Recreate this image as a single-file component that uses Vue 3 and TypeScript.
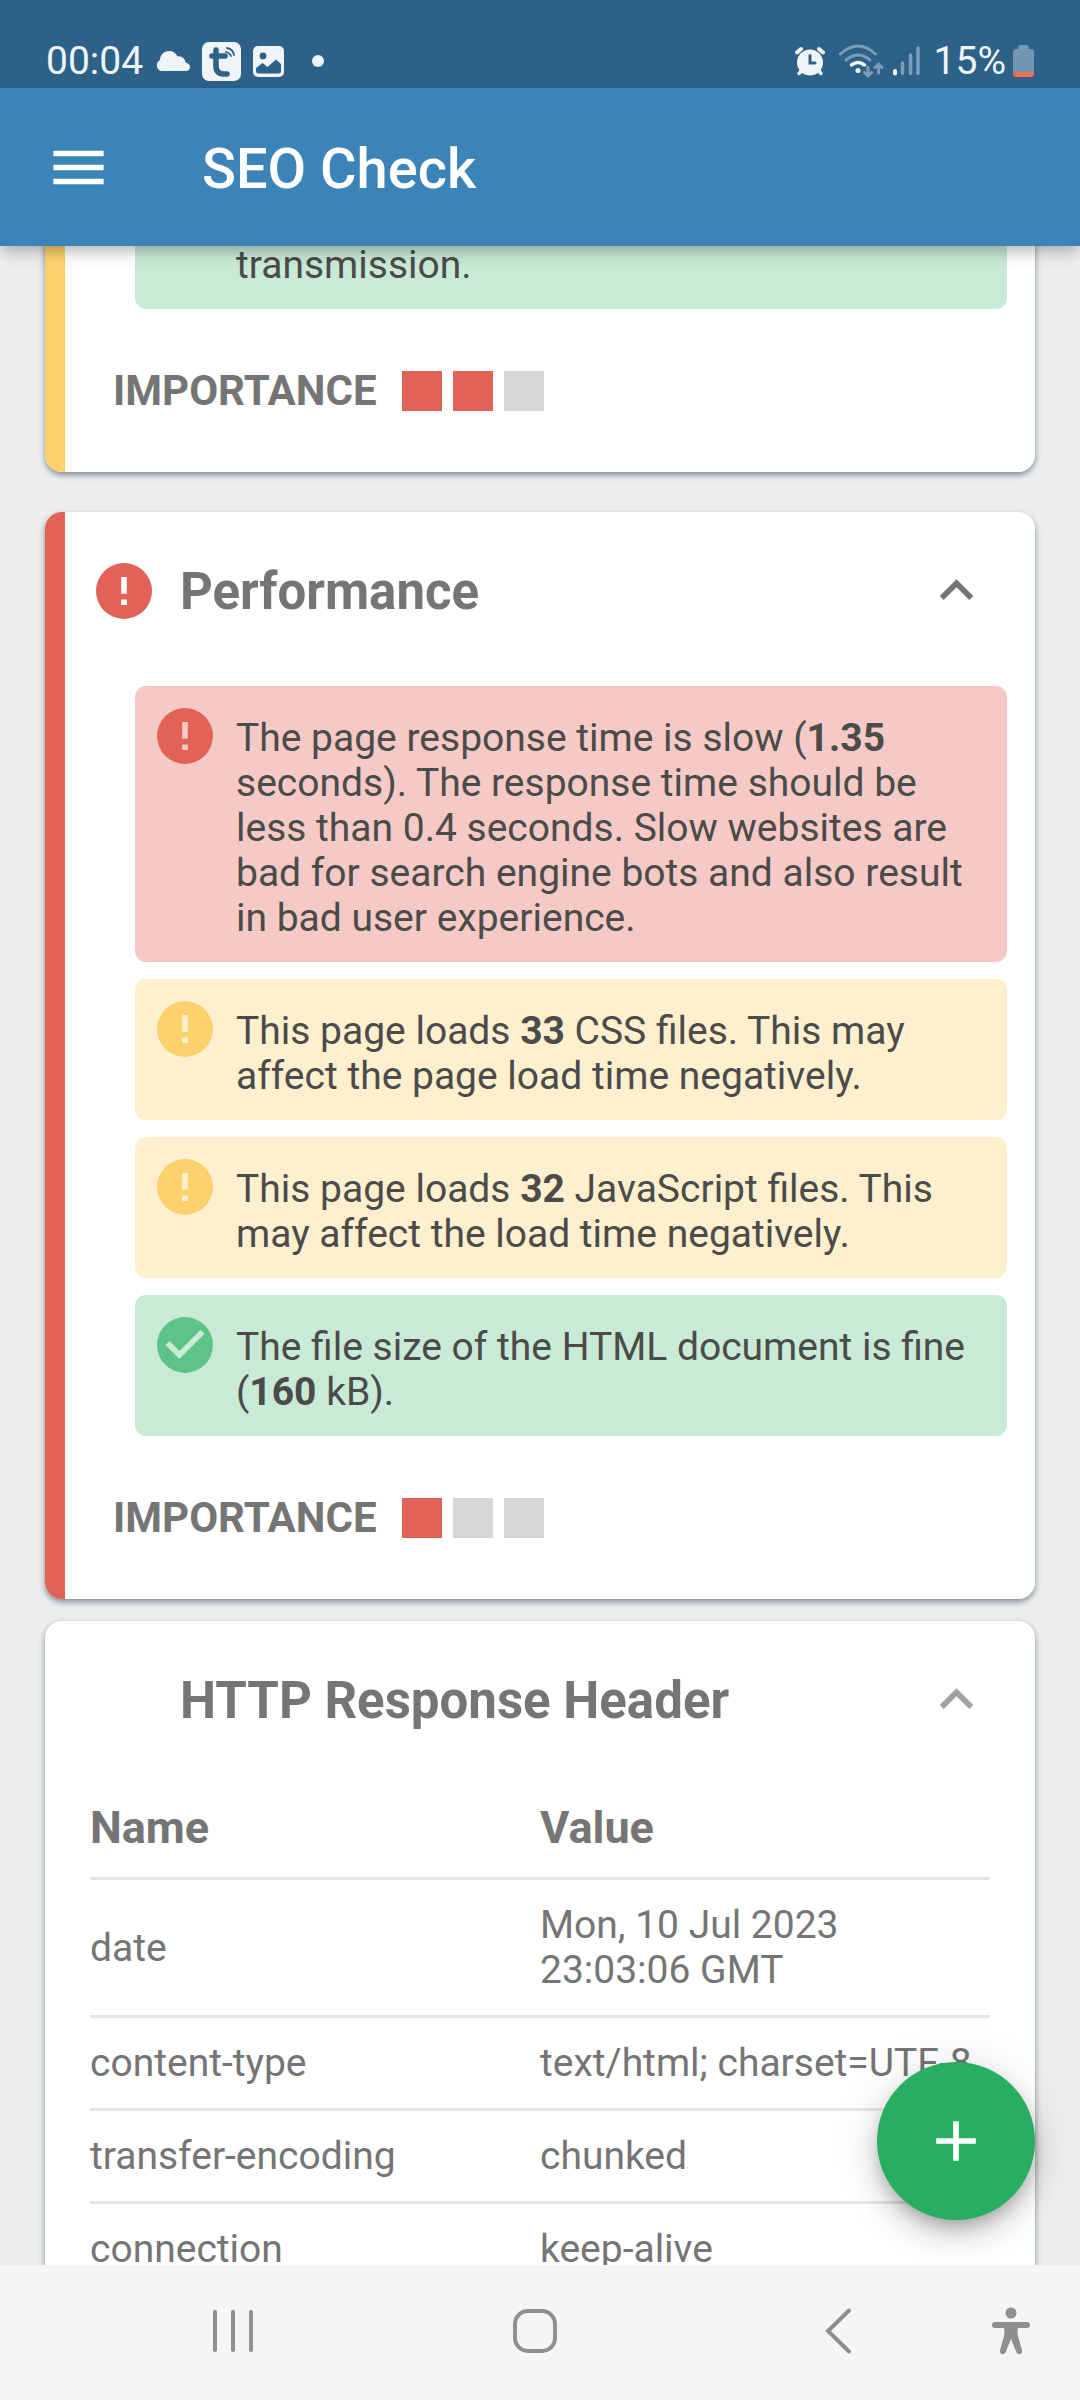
<script setup lang="ts">
type Level = 'error' | 'warning' | 'ok'

interface Part {
  text: string
  bold?: boolean
}

interface Finding {
  level: Level
  parts: Part[]
}

interface HeaderRow {
  name: string
  value: string
}

const findings: Finding[] = [
  {
    level: 'error',
    parts: [
      { text: 'The page response time is slow (' },
      { text: '1.35', bold: true },
      {
        text: ' seconds). The response time should be less than 0.4 seconds. Slow websites are bad for search engine bots and also result in bad user experience.',
      },
    ],
  },
  {
    level: 'warning',
    parts: [
      { text: 'This page loads ' },
      { text: '33', bold: true },
      { text: ' CSS files. This may affect the page load time negatively.' },
    ],
  },
  {
    level: 'warning',
    parts: [
      { text: 'This page loads ' },
      { text: '32', bold: true },
      { text: ' JavaScript files. This may affect the load time negatively.' },
    ],
  },
  {
    level: 'ok',
    parts: [
      { text: 'The file size of the HTML document is fine (' },
      { text: '160', bold: true },
      { text: ' kB).' },
    ],
  },
]

const headerRows: HeaderRow[] = [
  { name: 'date', value: 'Mon, 10 Jul 2023 23:03:06 GMT' },
  { name: 'content-type', value: 'text/html; charset=UTF-8' },
  { name: 'transfer-encoding', value: 'chunked' },
  { name: 'connection', value: 'keep-alive' },
]

const ALERT_PATH = 'M12 2a10 10 0 1 0 0 20 10 10 0 0 0 0-20zm1 15h-2v-2h2v2zm0-4h-2V7h2v6z'
const CHECK_PATH =
  'M12 2a10 10 0 1 0 0 20 10 10 0 0 0 0-20zm-2 15l-5-5 1.410-1.410L10 14.170l7.590-7.590L19 8l-9 9z'
const CHEVRON_PATH = 'M12 8l-6 6 1.410 1.410L12 10.830l4.590 4.580L18 14z'

const iconPath = (level: Level): string => (level === 'ok' ? CHECK_PATH : ALERT_PATH)
</script>

<template>
  <div class="screen">
    <div class="status">
      <div class="status-left">
        <span>00:04</span>
        <svg width="35" height="20" viewBox="0 0 35 20" aria-hidden="true">
          <path d="M6 20a6 6 0 0 1-1-11C5 4 9 0 14 0c4 0 7 2 8.500 5.500C27 4.500 30 8 30.500 11.500 33.500 12 35 14 35 16.200 35 18.500 33 20 31 20z" fill="#eff4f8" />
        </svg>
        <svg width="39" height="39" viewBox="0 0 39 39" aria-hidden="true">
          <rect width="39" height="39" rx="7" fill="#eff4f8" />
          <path d="M14 8v16q0 8 8 8h3M10 14h13" fill="none" stroke="#2d6187" stroke-width="5.500" stroke-linecap="round" />
          <path d="M25 6q6 1 7 7M24 10q4 1 5 4" fill="none" stroke="#2d6187" stroke-width="1.800" stroke-linecap="round" />
        </svg>
        <svg width="31" height="31" viewBox="0 0 31 31" aria-hidden="true">
          <rect width="31" height="31" rx="5" fill="#eff4f8" />
          <circle cx="10" cy="10" r="3.400" fill="#2d6187" />
          <path d="M3 22l6.500-5 5 4L23 13.500l5 4.500v7q0 2.500-2.500 2.500h-20Q3 27.500 3 25z" fill="#2d6187" />
        </svg>
        <span class="dot"></span>
      </div>
      <div class="status-right">
        <svg width="37" height="30" viewBox="0 0 37 30" aria-hidden="true">
          <g stroke="#eff4f8" stroke-linecap="round">
            <path d="M2 6.500L6 3M28 6.500L24 3" stroke-width="4" />
            <path d="M7 24l-3 3.500M23 24l3 3.500" stroke-width="3.500" />
          </g>
          <circle cx="15" cy="16.500" r="13" fill="#eff4f8" />
          <path d="M15 9.500v7.500h5" fill="none" stroke="#2d6187" stroke-width="3" stroke-linecap="round" />
        </svg>
        <svg width="47" height="34" viewBox="0 0 47 34" aria-hidden="true">
          <g fill="none" stroke="#7b9db8" stroke-width="3" stroke-linecap="round" stroke-linejoin="round">
            <path d="M1.500 10Q19 -6 36.500 10M7 16q12-10 24 0" />
            <path d="M29 23v9m-3.500-3.500L29 32l3.500-3.500M39.500 29v-9m-3.500 3.500l3.500-3.500 3.500 3.500" />
          </g>
          <path d="M12.500 21q6.500-5 13 0" fill="none" stroke="#eff4f8" stroke-width="3.500" stroke-linecap="round" />
          <circle cx="19" cy="26.500" r="2.500" fill="#eff4f8" />
        </svg>
        <svg width="34" height="30" viewBox="0 0 34 30" aria-hidden="true">
          <g stroke-width="3.500" stroke-linecap="round" stroke="#7b9db8">
            <path d="M9.500 17v10.500M17.500 9v18.500M25 2v25.500" />
            <path d="M2 25v2.500" stroke="#eff4f8" stroke-width="4" />
          </g>
        </svg>
        <span>15%</span>
        <svg width="22" height="32" viewBox="0 0 22 32" aria-hidden="true">
          <path d="M7 0h7q2 0 2 4h2q3 0 3 3v20H0V7q0-3 3-3h2q0-4 2-4z" fill="#7496b1" />
          <path d="M0 27h21v2q0 3-3 3H3q-3 0-3-3z" fill="#ec6e4c" />
        </svg>
      </div>
    </div>

    <header class="app-bar">
      <button class="icon-button" type="button" aria-label="Menu">
        <svg width="67" height="67" viewBox="0 0 24 24" fill="#fff"><path d="M3 18h18v-2H3v2zm0-5h18v-2H3v2zm0-7v2h18V6H3z" /></svg>
      </button>
      <h1>SEO Check</h1>
    </header>

    <main>
      <div class="cards">
        <section class="card striped warning">
          <ul class="findings">
            <li class="finding ok">
              <svg class="badge" viewBox="2 2 20 20" aria-hidden="true"><path :d="CHECK_PATH" /></svg>
              <p class="last-line">transmission.</p>
            </li>
          </ul>
          <div class="importance">
            <span>IMPORTANCE</span>
            <i class="on"></i><i class="on"></i><i></i>
          </div>
        </section>

        <section class="card striped error">
          <div class="card-head">
            <div class="slot">
              <svg class="badge" viewBox="2 2 20 20" aria-hidden="true"><path :d="ALERT_PATH" /></svg>
            </div>
            <h2>Performance</h2>
            <button class="icon-button" type="button" aria-label="Collapse Performance">
              <svg width="67" height="67" viewBox="0 0 24 24" fill="#757575"><path :d="CHEVRON_PATH" /></svg>
            </button>
          </div>
          <ul class="findings">
            <li v-for="(finding, i) in findings" :key="i" class="finding" :class="finding.level">
              <svg class="badge" viewBox="2 2 20 20" aria-hidden="true"><path :d="iconPath(finding.level)" /></svg>
              <p><template v-for="(part, j) in finding.parts" :key="j"><b v-if="part.bold">{{ part.text }}</b><template v-else>{{ part.text }}</template></template></p>
            </li>
          </ul>
          <div class="importance">
            <span>IMPORTANCE</span>
            <i class="on"></i><i></i><i></i>
          </div>
        </section>

        <section class="card plain">
          <div class="card-head">
            <div class="slot"></div>
            <h2>HTTP Response Header</h2>
            <button class="icon-button" type="button" aria-label="Collapse HTTP Response Header">
              <svg width="67" height="67" viewBox="0 0 24 24" fill="#a0a0a0"><path :d="CHEVRON_PATH" /></svg>
            </button>
          </div>
          <div class="table-wrap">
            <table>
              <thead>
                <tr><th scope="col">Name</th><th scope="col">Value</th></tr>
              </thead>
              <tbody>
                <tr v-for="row in headerRows" :key="row.name">
                  <td>{{ row.name }}</td>
                  <td>{{ row.value }}</td>
                </tr>
              </tbody>
            </table>
          </div>
        </section>
      </div>

      <button class="fab" type="button" aria-label="Add">
        <svg width="68" height="68" viewBox="0 0 24 24" fill="#fff"><path d="M19 13h-6v6h-2v-6H5v-2h6V5h2v6h6z" /></svg>
      </button>
    </main>

    <nav class="nav-bar" aria-label="System">
      <button class="icon-button" type="button" aria-label="Recent apps">
        <svg width="44" height="44" viewBox="0 0 44 44"><path d="M4 3v38M22 3v38M40 3v38" stroke="#8f8f8f" stroke-width="4" stroke-linecap="round" /></svg>
      </button>
      <button class="icon-button" type="button" aria-label="Home">
        <svg width="44" height="44" viewBox="0 0 44 44"><rect x="2" y="2" width="40" height="40" rx="13" fill="none" stroke="#8f8f8f" stroke-width="4" /></svg>
      </button>
      <button class="icon-button" type="button" aria-label="Back">
        <svg width="26" height="46" viewBox="0 0 26 46"><path d="M24 2.500L3 23l21 20.500" fill="none" stroke="#8f8f8f" stroke-width="4" stroke-linecap="round" /></svg>
      </button>
      <button class="icon-button" type="button" aria-label="Accessibility">
        <svg width="40" height="48" viewBox="0 0 40 48">
          <circle cx="20" cy="6" r="5.500" fill="#8f8f8f" />
          <path d="M4 15h32q3 0 3 3t-3 3h-9q-1 4 0 8l4 14q.5 3-1.500 4t-4-1.500L20 32l-5.500 13.500q-2 2.500-4 1.500T9 43l4-14q1-4 0-8H4q-3 0-3-3t3-3z" fill="#8f8f8f" />
        </svg>
      </button>
    </nav>
  </div>
</template>

<style>
body {
  margin: 0;
}
</style>

<style scoped>
* {
  box-sizing: border-box;
}

.screen {
  display: flex;
  flex-direction: column;
  height: 100vh;
  overflow: hidden;
  background: #edeef0;
  color: #757575;
  font-family: Roboto, sans-serif;
  font-size: 39px;
  line-height: 45px;
}

h1,
h2,
p,
ul {
  margin: 0;
  padding: 0;
}

svg {
  display: block;
  flex: none;
}

.icon-button {
  display: flex;
  align-items: center;
  justify-content: center;
  padding: 0;
  border: 0;
  background: none;
}

.status {
  display: flex;
  flex: none;
  align-items: center;
  justify-content: space-between;
  height: 88px;
  padding: 34px 45px 0 46px;
  background: #2d6187;
  color: #eff4f8;
}

.status-left,
.status-right {
  display: flex;
  align-items: center;
  gap: 12px;
}

.status-right {
  gap: 7px;
}

.dot {
  width: 12px;
  height: 12px;
  margin-left: 16px;
  border-radius: 50%;
  background: #eff4f8;
}

.app-bar {
  position: relative;
  z-index: 1;
  display: flex;
  flex: none;
  align-items: center;
  gap: 90px;
  height: 158px;
  padding: 0 45px;
  background: #3c83b7;
  box-shadow:
    0 6px 11px -3px rgba(0, 0, 0, 0.2),
    0 11px 14px 0 rgba(0, 0, 0, 0.1);
}

h1 {
  padding-top: 4px;
  color: #fff;
  font-size: 56px;
  font-weight: 500;
  line-height: 64px;
}

main {
  position: relative;
  flex: 1;
  min-height: 0;
  overflow: hidden;
}

/* The list is scrolled: the first card starts above the visible area. */
.cards {
  display: flex;
  flex-direction: column;
  margin-top: -95px;
  padding: 0 45px;
}

.card {
  border-radius: 17px;
  background: #fff;
  box-shadow: 0 3px 6px #7f8c8d;
}

.striped {
  margin-bottom: 40px;
  background: linear-gradient(to right, var(--level) 20px, #fff 20px);
}

.striped.error {
  margin-bottom: 22px;
}

.error {
  --level: #e16358;
  --tint: #f5c9c5;
}

.warning {
  --level: #fdd26e;
  --tint: #feefce;
}

.ok {
  --level: #5ec387;
  --tint: #c9ead7;
}

.badge {
  width: 56px;
  height: 56px;
  fill: var(--level);
}

.card-head {
  display: flex;
  align-items: center;
  height: 157px;
  padding: 0 45px 0 51px;
}

.slot {
  flex: none;
  width: 56px;
}

h2 {
  flex: 1;
  padding-top: 2px;
  margin-left: 28px;
  font-size: 51px;
  font-weight: 700;
  line-height: 60px;
}

.findings {
  display: flex;
  flex-direction: column;
  gap: 17px;
  padding: 17px 28px 0 90px;
  list-style: none;
}

.finding {
  display: flex;
  align-items: flex-start;
  gap: 23px;
  min-height: 141px;
  padding: 22px 28px 0 22px;
  border-radius: 11px;
  background: var(--tint);
  color: #4b4b49;
}

.finding p {
  flex: 1;
  padding: 8px 0 21px;
}

.finding .last-line {
  align-self: flex-end;
}

.importance {
  display: flex;
  align-items: center;
  gap: 11px;
  padding: 62px 28px 61px 68px;
  font-size: 42px;
  font-weight: 700;
  line-height: 40px;
}

.importance span {
  margin-right: 14px;
}

.importance i {
  width: 40px;
  height: 40px;
  background: #d6d7d9;
}

.importance .on {
  background: #e16358;
}

.table-wrap {
  padding: 0 45px;
}

table {
  width: 100%;
  border-collapse: separate;
  border-spacing: 0;
  table-layout: fixed;
}

th,
td {
  padding: 23px 0 22px;
  text-align: left;
  vertical-align: middle;
  border-bottom: 3px solid #e5e5e5;
}

th {
  font-size: 45px;
  font-weight: 700;
  line-height: 54px;
}

.fab {
  position: absolute;
  right: 45px;
  bottom: 45px;
  display: flex;
  align-items: center;
  justify-content: center;
  width: 158px;
  height: 158px;
  padding: 0;
  border: 0;
  border-radius: 50%;
  background: #28ae61;
  box-shadow:
    0 8px 14px -3px rgba(0, 0, 0, 0.2),
    0 17px 28px 0 rgba(0, 0, 0, 0.14),
    0 3px 50px 0 rgba(0, 0, 0, 0.12);
}

.nav-bar {
  display: grid;
  flex: none;
  grid-template-columns: 1fr 1fr 1fr 44px;
  align-items: center;
  height: 135px;
  padding: 0 47px 3px 82px;
  background: #f5f5f5;
}
</style>
